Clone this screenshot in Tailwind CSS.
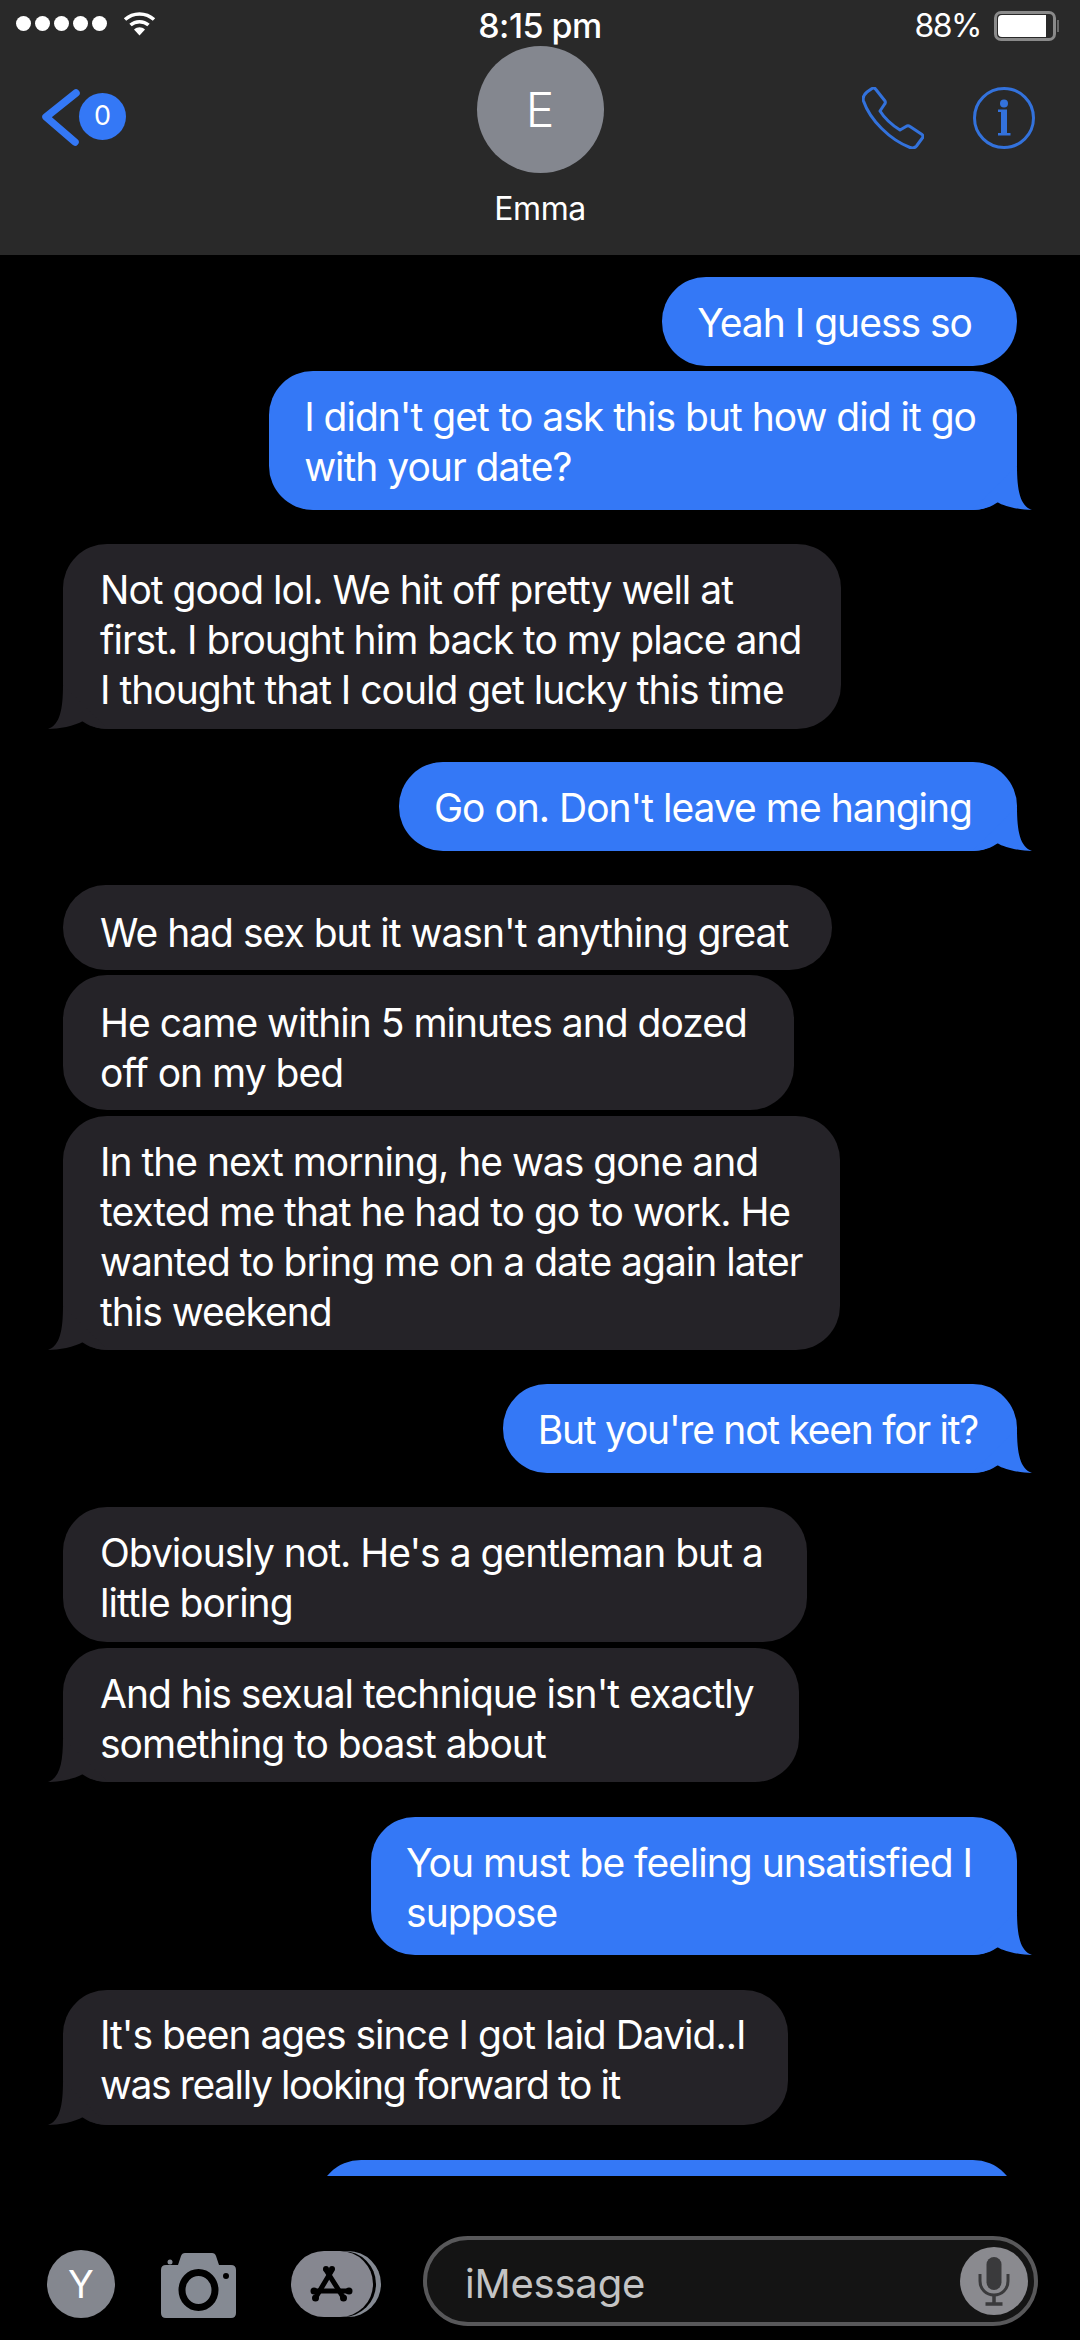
<!DOCTYPE html>
<html lang="en">
  <head>
    <meta charset="UTF-8" />
    <meta name="viewport" content="width=device-width, initial-scale=1.0" />
    <title>Emma</title>
    <script src="https://cdn.jsdelivr.net/npm/@tailwindcss/browser@4"></script>
  </head>
  <body class="bg-black font-['Inter',sans-serif] text-white">
    <div class="flex h-[2340px] w-[1080px] flex-col overflow-hidden">
      <!-- Header -->
      <header class="h-[255px] shrink-0 bg-[#292929]">
        <div class="grid h-[46px] grid-cols-[1fr_auto_1fr] items-start pt-[9px]">
          <div class="flex items-center pl-[16px] pt-[1px]">
            <div class="flex gap-[4px]">
              <span class="h-[15px] w-[15px] rounded-full bg-white"></span>
              <span class="h-[15px] w-[15px] rounded-full bg-white"></span>
              <span class="h-[15px] w-[15px] rounded-full bg-white"></span>
              <span class="h-[15px] w-[15px] rounded-full bg-white"></span>
              <span class="h-[15px] w-[15px] rounded-full bg-white"></span>
            </div>
            <svg class="ml-[16px]" width="33" height="26" viewBox="0 0 33 26" fill="none">
              <path d="M2 9.5C10 2 23 2 31 9.5" stroke="#fff" stroke-width="3.5" />
              <path d="M7.5 15C12.5 10.5 20.5 10.5 25.5 15" stroke="#fff" stroke-width="3.5" />
              <path d="M11 19.5C14.5 16.5 18.5 16.5 22 19.5L16.5 25.5Z" fill="#fff" />
            </svg>
          </div>
          <div class="text-[34px] font-medium leading-[34px] tracking-[-0.5px]">8:15 pm</div>
          <div class="flex items-center justify-end pr-[21px]">
            <span class="text-[32px] leading-[34px] tracking-[-1.5px]">88%</span>
            <div class="ml-[13px] flex h-[30px] w-[62px] rounded-[7px] border-[3px] border-[#8a8a8a] p-[1px] pr-[7px]">
              <div class="h-full w-full rounded-l-[4px] bg-white"></div>
            </div>
            <div class="ml-[1px] h-[12px] w-[2px] bg-[#6a6a6a]"></div>
          </div>
        </div>
        <div class="grid grid-cols-[1fr_auto_1fr]">
          <div class="flex h-[104px] items-center pl-[40px] pt-[37px]">
            <svg width="42" height="60" viewBox="0 0 42 60" fill="none">
              <path d="M36 6L6 30L35 55" stroke="#3478f6" stroke-width="7.5" stroke-linecap="round" stroke-linejoin="round" />
            </svg>
            <span class="-ml-[3px] flex h-[47px] w-[47px] items-center justify-center rounded-full bg-[#3478f6] text-[27px]">0</span>
          </div>
          <div class="flex flex-col items-center">
            <div class="flex h-[127px] w-[127px] items-center justify-center rounded-full bg-[#84878f] text-[48px] font-light">E</div>
            <div class="mt-[18px] text-[32px] leading-[36px] tracking-[-0.5px]">Emma</div>
          </div>
          <div class="flex items-start justify-end gap-[49px] pr-[45px] pt-[41px]">
            <svg width="62" height="62" viewBox="0 0 62 62" fill="none">
              <path d="M5 5L10 1.5Q12 0 13.5 2L23 14Q24 16 22 18L18 24C23 32 30 38 38 43L44 39.5Q46 38 48 39.5L60 47.5Q62 49.5 60 51.5L54.5 59Q52 62 48 60.5C28 53 8 33 1.5 14Q0 9 5 5Z" stroke="#3372dc" stroke-width="3" stroke-linejoin="round" />
            </svg>
            <svg width="62" height="62" viewBox="0 0 62 62" fill="none">
              <circle cx="31" cy="31" r="29.5" stroke="#3372dc" stroke-width="3" />
              <circle cx="31" cy="16.5" r="4" fill="#3372dc" />
              <path d="M25 22.5H34V46H37.5V48.5H25V46H28V25H25Z" fill="#3372dc" />
            </svg>
          </div>
        </div>
      </header>

      <!-- Messages -->
      <main class="flex h-[1921px] shrink-0 flex-col overflow-hidden pt-[22px] text-[39px] leading-[50px] tracking-[-1px]">
        <div class="mr-[63px] self-end rounded-[44px] bg-[#3478f6] pb-[18px] pl-[35px] pr-[45px] pt-[21px] whitespace-nowrap">Yeah I guess so</div>

        <div class="relative mr-[63px] mt-[5px] self-end rounded-[44px] bg-[#3478f6] pb-[18px] pl-[35px] pr-[41px] pt-[21px] whitespace-nowrap">
          I didn't get to ask this but how did it go<br />with your date?
          <svg class="absolute bottom-0 right-[-15px] text-[#3478f6]" width="60" height="50" viewBox="0 0 60 50"><path fill="currentColor" d="M45 6C45 30 48 46 60 50C50 50 33 47 25 42C17 47 10 50 0 50Z" /></svg>
        </div>

        <div class="relative ml-[63px] mt-[34px] self-start rounded-[44px] bg-[#252328] pb-[14px] pl-[37px] pr-[40px] pt-[21px] whitespace-nowrap">
          Not good lol. We hit off pretty well at<br />first. I brought him back to my place and<br />I thought that I could get lucky this time
          <svg class="absolute bottom-0 left-[-15px] -scale-x-100 text-[#252328]" width="60" height="50" viewBox="0 0 60 50"><path fill="currentColor" d="M45 6C45 30 48 46 60 50C50 50 33 47 25 42C17 47 10 50 0 50Z" /></svg>
        </div>

        <div class="relative mr-[63px] mt-[33px] self-end rounded-[44px] bg-[#3478f6] pb-[18px] pl-[35px] pr-[45px] pt-[21px] whitespace-nowrap">
          Go on. Don't leave me hanging
          <svg class="absolute bottom-0 right-[-15px] text-[#3478f6]" width="60" height="50" viewBox="0 0 60 50"><path fill="currentColor" d="M45 6C45 30 48 46 60 50C50 50 33 47 25 42C17 47 10 50 0 50Z" /></svg>
        </div>

        <div class="ml-[63px] mt-[34px] self-start rounded-[43px] bg-[#252328] pb-[12px] pl-[37px] pr-[44px] pt-[23px] whitespace-nowrap">We had sex but it wasn't anything great</div>

        <div class="ml-[63px] mt-[5px] self-start rounded-[44px] bg-[#252328] pb-[12px] pl-[37px] pr-[47px] pt-[23px] whitespace-nowrap">He came within 5 minutes and dozed<br />off on my bed</div>

        <div class="relative ml-[63px] mt-[6px] self-start rounded-[44px] bg-[#252328] pb-[13px] pl-[37px] pr-[38px] pt-[21px] whitespace-nowrap">
          In the next morning, he was gone and<br />texted me that he had to go to work. He<br />wanted to bring me on a date again later<br />this weekend
          <svg class="absolute bottom-0 left-[-15px] -scale-x-100 text-[#252328]" width="60" height="50" viewBox="0 0 60 50"><path fill="currentColor" d="M45 6C45 30 48 46 60 50C50 50 33 47 25 42C17 47 10 50 0 50Z" /></svg>
        </div>

        <div class="relative mr-[63px] mt-[34px] self-end rounded-[44px] bg-[#3478f6] pb-[18px] pl-[35px] pr-[39px] pt-[21px] tracking-[-1.25px] whitespace-nowrap">
          But you're not keen for it?
          <svg class="absolute bottom-0 right-[-15px] text-[#3478f6]" width="60" height="50" viewBox="0 0 60 50"><path fill="currentColor" d="M45 6C45 30 48 46 60 50C50 50 33 47 25 42C17 47 10 50 0 50Z" /></svg>
        </div>

        <div class="ml-[63px] mt-[34px] self-start rounded-[44px] bg-[#252328] pb-[14px] pl-[37px] pr-[44px] pt-[21px] whitespace-nowrap">Obviously not. He's a gentleman but a<br />little boring</div>

        <div class="relative ml-[63px] mt-[6px] self-start rounded-[44px] bg-[#252328] pb-[13px] pl-[37px] pr-[45px] pt-[21px] whitespace-nowrap">
          And his sexual technique isn't exactly<br />something to boast about
          <svg class="absolute bottom-0 left-[-15px] -scale-x-100 text-[#252328]" width="60" height="50" viewBox="0 0 60 50"><path fill="currentColor" d="M45 6C45 30 48 46 60 50C50 50 33 47 25 42C17 47 10 50 0 50Z" /></svg>
        </div>

        <div class="relative mr-[63px] mt-[35px] self-end rounded-[44px] bg-[#3478f6] pb-[17px] pl-[35px] pr-[45px] pt-[21px] whitespace-nowrap">
          You must be feeling unsatisfied I<br />suppose
          <svg class="absolute bottom-0 right-[-15px] text-[#3478f6]" width="60" height="50" viewBox="0 0 60 50"><path fill="currentColor" d="M45 6C45 30 48 46 60 50C50 50 33 47 25 42C17 47 10 50 0 50Z" /></svg>
        </div>

        <div class="relative ml-[63px] mt-[35px] self-start rounded-[44px] bg-[#252328] pb-[15px] pl-[37px] pr-[43px] pt-[20px] whitespace-nowrap">
          It's been ages since I got laid David..I<br /><span class="tracking-[-1.4px]">was really looking forward to it</span>
          <svg class="absolute bottom-0 left-[-15px] -scale-x-100 text-[#252328]" width="60" height="50" viewBox="0 0 60 50"><path fill="currentColor" d="M45 6C45 30 48 46 60 50C50 50 33 47 25 42C17 47 10 50 0 50Z" /></svg>
        </div>

        <div class="mr-[63px] mt-[35px] h-[139px] w-[700px] shrink-0 self-end rounded-[44px] bg-[#3478f6]"></div>
      </main>

      <!-- Composer -->
      <footer class="flex flex-1 items-start bg-black pl-[47px] pt-[60px]">
        <div class="mt-[14px] flex h-[68px] w-[68px] items-center justify-center rounded-full bg-[#84878f] text-[38px]">Y</div>
        <svg class="ml-[46px] mt-[17px]" width="75" height="65" viewBox="0 0 75 65">
          <path fill="#858a93" d="M24 0H51Q54 0 55 3L58 12H70Q75 12 75 17V60Q75 65 70 65H5Q0 65 0 60V17Q0 12 5 12H17L20 3Q21 0 24 0Z" />
          <circle cx="9" cy="9" r="2.5" fill="#858a93" />
          <ellipse cx="37.5" cy="37" rx="16.5" ry="17.5" fill="none" stroke="#000" stroke-width="7" />
          <circle cx="65" cy="23" r="3" fill="#000" />
        </svg>
        <svg class="ml-[55px] mt-[15px]" width="90" height="66" viewBox="0 0 90 66">
          <rect x="14" y="0" width="76" height="66" rx="33" fill="#858a93" />
          <rect x="8" y="0" width="77" height="66" rx="33" fill="#000" />
          <rect x="0" y="0" width="82" height="66" rx="33" fill="#868790" />
          <g stroke="#000" stroke-width="5" stroke-linecap="round" fill="none">
            <path d="M40.5 20L25 46" />
            <path d="M35 19L52 46" />
            <path d="M24 40H57" />
          </g>
          <g fill="#000">
            <circle cx="35" cy="18" r="3" />
            <circle cx="41" cy="18" r="3" />
            <circle cx="24.5" cy="47" r="3.5" />
            <circle cx="52.5" cy="47" r="3.5" />
            <circle cx="23" cy="40" r="3.5" />
            <circle cx="58" cy="40" r="3.5" />
          </g>
        </svg>
        <div class="ml-[42px] flex h-[90px] w-[615px] items-center justify-between rounded-full border-[4px] border-[#58585a] bg-[#141414] pl-[38px] pr-[6px]">
          <span class="pt-[6px] text-[40px] leading-[44px] tracking-[-0.2px] text-[#c4c4c4]">iMessage</span>
          <svg width="68" height="68" viewBox="0 0 68 68" fill="none">
            <circle cx="34" cy="34" r="34" fill="#8a8a8f" />
            <rect x="26.5" y="10" width="15" height="33" rx="7.5" fill="#3a3a3c" />
            <path d="M20 27V34C20 42 26 48 34 48C42 48 48 42 48 34V27" stroke="#3a3a3c" stroke-width="3" />
            <path d="M34 48V56M25.5 57H42.5" stroke="#3a3a3c" stroke-width="3.5" />
          </svg>
        </div>
      </footer>
    </div>
  </body>
</html>
